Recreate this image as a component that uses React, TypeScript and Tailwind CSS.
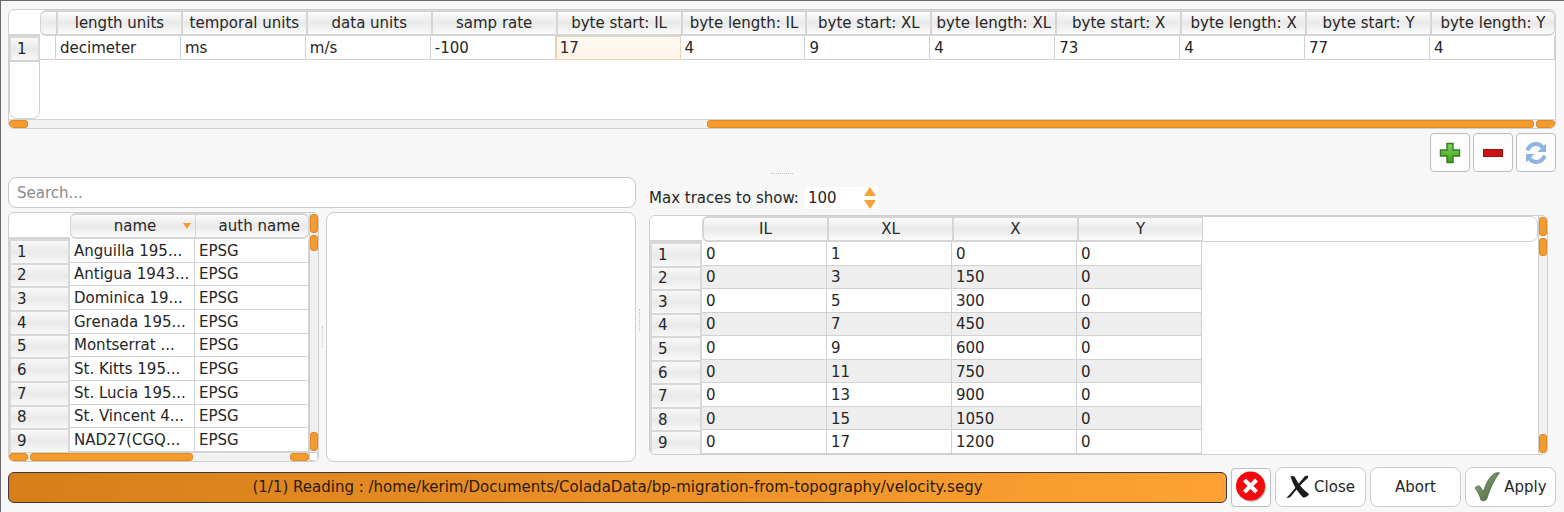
import { useState } from "react";
import type { ReactNode } from "react";

const HEAD =
  "h-[26px] border-y-2 border-[#d5d5d5] bg-linear-to-b from-[#fafafa] from-5% via-[#e9e9e9] via-50% to-[#fbfbfb] p-0 text-center font-normal whitespace-nowrap";
const ROWHEAD =
  "border-2 border-b-0 border-[#d8d8d8] bg-linear-to-b from-[#f9f9f9] via-[#e9e9e9] via-50% to-[#f8f8f8] py-0 pr-0 pl-[6px] text-left font-normal";
const CELL = "truncate border-r border-b border-[#d2d2d2] px-1";
const THUMB = "rounded-[3px] border border-[#dc8a2c] bg-[#f49b2c]";

function VScroll({ thumb }: { thumb: string }) {
  return (
    <div className="flex w-[9px] shrink-0 flex-col gap-[2px] border-l border-[#cfcfcf] bg-[#f0f0f0] py-px">
      <button aria-label="Scroll up" className={`h-[19px] w-full shrink-0 ${THUMB}`} />
      <div className="min-h-0 flex-1">
        <div className={`w-full ${THUMB} ${thumb}`} />
      </div>
      <button aria-label="Scroll down" className={`h-[19px] w-full shrink-0 ${THUMB}`} />
    </div>
  );
}

function HScroll({ left, width }: { left: string; width: string }) {
  return (
    <div className="flex h-[9px] min-w-0 flex-1 gap-[2px] border-t border-[#d4d4d4] bg-[#f2f2f2]">
      <button aria-label="Scroll left" className={`w-[19px] shrink-0 ${THUMB}`} />
      <div className="flex min-w-0 flex-1">
        <div className={left} />
        <div className={`h-full ${THUMB} ${width}`} />
      </div>
      <button aria-label="Scroll right" className={`w-[19px] shrink-0 ${THUMB}`} />
    </div>
  );
}

function ToolButton({ label, children }: { label: string; children: ReactNode }) {
  return (
    <button
      aria-label={label}
      className="flex h-[39px] w-10 shrink-0 items-center justify-center rounded-sm border border-[#bdbdc0] bg-[#fdfdfd]"
    >
      {children}
    </button>
  );
}

function PushButton({ children }: { children: ReactNode }) {
  return (
    <button className="flex h-10 w-[91px] shrink-0 items-center justify-center gap-1 rounded-lg border border-[#cccccc] bg-white">
      {children}
    </button>
  );
}

const params: [string, string][] = [
  ["length units", "decimeter"],
  ["temporal units", "ms"],
  ["data units", "m/s"],
  ["samp rate", "-100"],
  ["byte start: IL", "17"],
  ["byte length: IL", "4"],
  ["byte start: XL", "9"],
  ["byte length: XL", "4"],
  ["byte start: X", "73"],
  ["byte length: X", "4"],
  ["byte start: Y", "77"],
  ["byte length: Y", "4"],
];

function ParamTable() {
  return (
    <section className="h-[120px] shrink-0 overflow-hidden rounded-md border border-[#cfcfcf] bg-white">
      <div className="flex h-[109px] flex-col">
        <table className="w-full table-fixed border-separate border-spacing-0">
          <colgroup>
            <col className="w-[31px]" />
            <col className="w-4" />
          </colgroup>
          <thead>
            <tr>
              <td className="border-b-2 border-[#d5d5d5]" />
              <th className={`rounded-l-md border-l ${HEAD}`} />
              {params.map(([name], i) => (
                <th
                  key={name}
                  className={`border-l-2 ${HEAD} ${i === params.length - 1 ? "rounded-r-md border-r" : ""}`}
                >
                  {name}
                </th>
              ))}
            </tr>
          </thead>
          <tbody>
            <tr className="h-6">
              <th className={ROWHEAD}>1</th>
              <td className={CELL} />
              {params.map(([name, value]) => (
                <td
                  key={name}
                  className={
                    name === "byte start: IL"
                      ? "border border-[#e8d3b8] bg-linear-to-b from-[#fffaf5] to-[#fdf3e8] px-[3px] py-0"
                      : `py-0 ${CELL}`
                  }
                >
                  {value}
                </td>
              ))}
            </tr>
          </tbody>
        </table>
        <div className="w-[31px] flex-1 rounded-b-lg border border-t-2 border-[#d2d2d2]" />
      </div>
      <div className="flex">
        <HScroll left="w-[45%]" width="w-[55%]" />
      </div>
    </section>
  );
}

const systems = [
  "Anguilla 195...",
  "Antigua 1943...",
  "Dominica 19...",
  "Grenada 195...",
  "Montserrat ...",
  "St. Kitts 195...",
  "St. Lucia 195...",
  "St. Vincent 4...",
  "NAD27(CGQ...",
];

function SystemTable() {
  return (
    <section className="flex w-[311px] shrink-0 flex-col overflow-hidden rounded-md border border-[#cfcfcf] bg-white">
      <div className="flex min-h-0 flex-1">
        <div className="h-full min-w-0 flex-1">
          <table className="h-full w-full table-fixed border-separate border-spacing-0">
            <colgroup>
              <col className="w-[61px]" />
              <col className="w-[125px]" />
            </colgroup>
            <thead>
              <tr>
                <td className="border-b-2 border-[#d5d5d5]" />
                <th className={`rounded-l-md border-l ${HEAD}`}>
                  <div className="flex items-center pr-1 pl-4">
                    <span className="flex-1">name</span>
                    <svg className="h-2 w-2" viewBox="0 0 8 8" aria-hidden="true">
                      <path d="M0 1h8L4 7z" fill="#f49b2c" />
                    </svg>
                  </div>
                </th>
                <th className={`rounded-r-md border-x ${HEAD}`}>
                  <div className="pr-2 text-right">auth name</div>
                </th>
              </tr>
            </thead>
            <tbody>
              {systems.map((name, i) => (
                <tr key={name}>
                  <th className={ROWHEAD}>{i + 1}</th>
                  <td className={`pt-px pb-0 ${CELL}`}>{name}</td>
                  <td className={`pt-px pb-0 ${CELL}`}>EPSG</td>
                </tr>
              ))}
            </tbody>
          </table>
        </div>
        <VScroll thumb="h-4" />
      </div>
      <div className="flex">
        <HScroll left="w-0" width="w-[63%]" />
        <div className="w-[9px] border border-[#cfcfcf] bg-white" />
      </div>
    </section>
  );
}

const traces = Array.from({ length: 9 }, (_, i) => [0, 2 * i + 1, 150 * i, 0]);

function TraceTable() {
  return (
    <section className="flex min-h-0 flex-1 overflow-hidden rounded-md border border-[#cfcfcf] bg-white">
      <div className="h-full min-w-0 flex-1">
        <table className="h-full w-full table-fixed border-separate border-spacing-0">
          <colgroup>
            <col className="w-[52px]" />
            <col className="w-[125px]" />
            <col className="w-[125px]" />
            <col className="w-[125px]" />
            <col className="w-[125px]" />
            <col />
          </colgroup>
          <thead>
            <tr>
              <td className="border-b-2 border-[#d5d5d5]" />
              {["IL", "XL", "X", "Y"].map((name) => (
                <th key={name} className={`border-l-2 first-of-type:rounded-l-md ${HEAD}`}>
                  {name}
                </th>
              ))}
              <td className="rounded-r-lg border border-[#d0d0d0]" />
            </tr>
          </thead>
          <tbody>
            {traces.map((row, i) => (
              <tr key={row[1]}>
                <th className={ROWHEAD}>{i + 1}</th>
                {row.map((value, j) => (
                  <td key={j} className={`pt-px pb-0 ${CELL} ${i % 2 ? "bg-[#eeeeee]" : "bg-white"}`}>
                    {value}
                  </td>
                ))}
              </tr>
            ))}
          </tbody>
        </table>
      </div>
      <VScroll thumb="h-[18px]" />
    </section>
  );
}

export default function App() {
  const [query, setQuery] = useState("");
  const [max, setMax] = useState(100);

  return (
    <main className="flex h-screen min-h-[500px] flex-col border-t border-l border-[#6b696b] bg-[#f7f7f7] pt-2 pr-2 pb-[5px] pl-[7px] font-['DejaVu_Sans','Noto_Sans',sans-serif] text-[15px] leading-5 text-[#262626]">
      <ParamTable />

      <div className="mt-1 flex justify-end gap-[3px]">
        <ToolButton label="Add">
          <svg className="h-[22px] w-[22px]" viewBox="0 0 22 22">
            <defs>
              <linearGradient id="plus" x1="0" y1="0" x2="0" y2="1">
                <stop offset="0" stopColor="#7fd858" />
                <stop offset="1" stopColor="#3d9d1e" />
              </linearGradient>
            </defs>
            <path
              d="M8 1.500h6V8h6.500v6H14v6.500H8V14H1.500V8H8z"
              fill="url(#plus)"
              stroke="#3a7a22"
              strokeWidth="1.400"
            />
          </svg>
        </ToolButton>
        <ToolButton label="Remove">
          <svg className="h-[22px] w-[22px]" viewBox="0 0 22 22">
            <rect x="1.500" y="7.500" width="19" height="7" fill="#cc1414" stroke="#9c1111" />
          </svg>
        </ToolButton>
        <ToolButton label="Refresh">
          <svg className="h-[22px] w-[22px]" viewBox="0 0 22 22" fill="none">
            <path d="M2.500 8.500A8.600 8.600 0 0 1 17.500 5.200" stroke="#8db4e2" strokeWidth="4" />
            <path d="M21 1.500V10h-8.500z" fill="#8db4e2" />
            <path d="M19.500 13.500A8.600 8.600 0 0 1 4.500 16.800" stroke="#8db4e2" strokeWidth="4" />
            <path d="M1 20.500V12h8.500z" fill="#8db4e2" />
          </svg>
        </ToolButton>
      </div>

      <div className="flex h-[5px] shrink-0 items-start justify-center">
        <div className="mt-px w-[22px] border-t border-dotted border-[#c0c0c0]" />
      </div>

      <div className="grid min-h-0 flex-1 grid-cols-[minmax(0,628fr)_13px_minmax(0,899fr)] grid-rows-[minmax(0,1fr)] pr-2">
        <div className="flex min-h-0 flex-col gap-1">
          <input
            aria-label="Search"
            placeholder="Search..."
            value={query}
            onChange={(e) => setQuery(e.target.value)}
            className="h-[31px] w-full shrink-0 rounded-lg border border-[#c8c8c8] bg-white px-2 placeholder:text-[#8a8a8a]"
          />
          <div className="flex min-h-0 flex-1">
            <SystemTable />
            <div className="flex w-[7px] items-center justify-center">
              <div className="h-[22px] border-l border-dotted border-[#c0c0c0]" />
            </div>
            <div className="flex-1 rounded-lg border border-[#cccccc] bg-white" />
          </div>
        </div>

        <div className="flex items-center pl-[3px]">
          <div className="h-[22px] border-l border-dotted border-[#c0c0c0]" />
        </div>

        <div className="flex min-h-0 flex-col pt-2 pb-[7px]">
          <div className="mb-1 flex h-[26px] shrink-0 items-center">
            <label htmlFor="max-traces">Max traces to show:</label>
            <div className="ml-[6px] flex h-[22px] items-center rounded-sm bg-white pr-[2px]">
              <input
                id="max-traces"
                inputMode="numeric"
                value={max}
                onChange={(e) => setMax(Number(e.target.value) || 0)}
                className="w-[59px] bg-transparent pl-[3px]"
              />
              <div className="flex flex-col gap-1">
                <button aria-label="More traces" onClick={() => setMax(max + 1)}>
                  <svg className="h-[9px] w-3" viewBox="0 0 12 9">
                    <path d="M0 9h12L6 0z" fill="#f9a136" />
                  </svg>
                </button>
                <button aria-label="Fewer traces" onClick={() => setMax(Math.max(0, max - 1))}>
                  <svg className="h-[9px] w-3" viewBox="0 0 12 9">
                    <path d="M0 0h12L6 9z" fill="#f9a136" />
                  </svg>
                </button>
              </div>
            </div>
          </div>
          <TraceTable />
        </div>
      </div>

      <footer className="mt-[5px] flex shrink-0 items-center gap-1">
        <div
          role="progressbar"
          aria-label="Reading"
          className="flex h-[31px] min-w-0 flex-1 items-center justify-center rounded-md border border-[#3d3640] bg-linear-to-r from-[#d67f18] to-[#ffa233] text-[#2c1a08]"
        >
          <span className="truncate">
            (1/1) Reading : /home/kerim/Documents/ColadaData/bp-migration-from-topography/velocity.segy
          </span>
        </div>
        <ToolButton label="Stop">
          <svg className="h-8 w-8" viewBox="0 0 32 32">
            <circle cx="16.500" cy="16.200" r="14.500" fill="#b9b9b9" />
            <circle cx="15.500" cy="15" r="14.500" fill="#f5080c" />
            <path d="M9.500 9l12 12M21.500 9l-12 12" stroke="#ffffff" strokeWidth="4" />
          </svg>
        </ToolButton>
        <PushButton>
          <svg className="h-6 w-6" viewBox="0 0 24 24" fill="#1c1c1c" aria-hidden="true">
            <path d="M4.500 1.500C6 .6 8 .8 9 2.200c3 6 7 11.500 14 16.800-1 2.500-3.500 3.800-6 3.500C11.500 17 7 10 4.500 1.500z" />
            <path d="M22 1c-1.500-.6-3 0-4 1.200C13 8 8 15 .5 22.800c2 .3 3.500-.4 4.800-1.800C11 14 15 9 21 3.800c1-.8 1.500-2 1-2.800z" />
          </svg>
          Close
        </PushButton>
        <PushButton>Abort</PushButton>
        <PushButton>
          <svg className="h-[30px] w-[26px]" viewBox="0 0 28 30" preserveAspectRatio="none" aria-hidden="true">
            <defs>
              <linearGradient id="check" x1="0" y1="0" x2="1" y2="1">
                <stop offset="0" stopColor="#8fae7c" />
                <stop offset="1" stopColor="#46633a" />
              </linearGradient>
            </defs>
            <path
              d="M1 16c1.500-2 4-2.600 5.500-1.500L10 20C13 11 17 4.500 22 1.500c2-.8 4-1 5.500-.7C22 7 17 17 13.500 27.500c-2.500 1.500-4.500 1.500-6 .5C6 23 4 19 1 16z"
              fill="url(#check)"
              stroke="#4a5f40"
              strokeWidth="0.800"
            />
          </svg>
          Apply
        </PushButton>
      </footer>
    </main>
  );
}
